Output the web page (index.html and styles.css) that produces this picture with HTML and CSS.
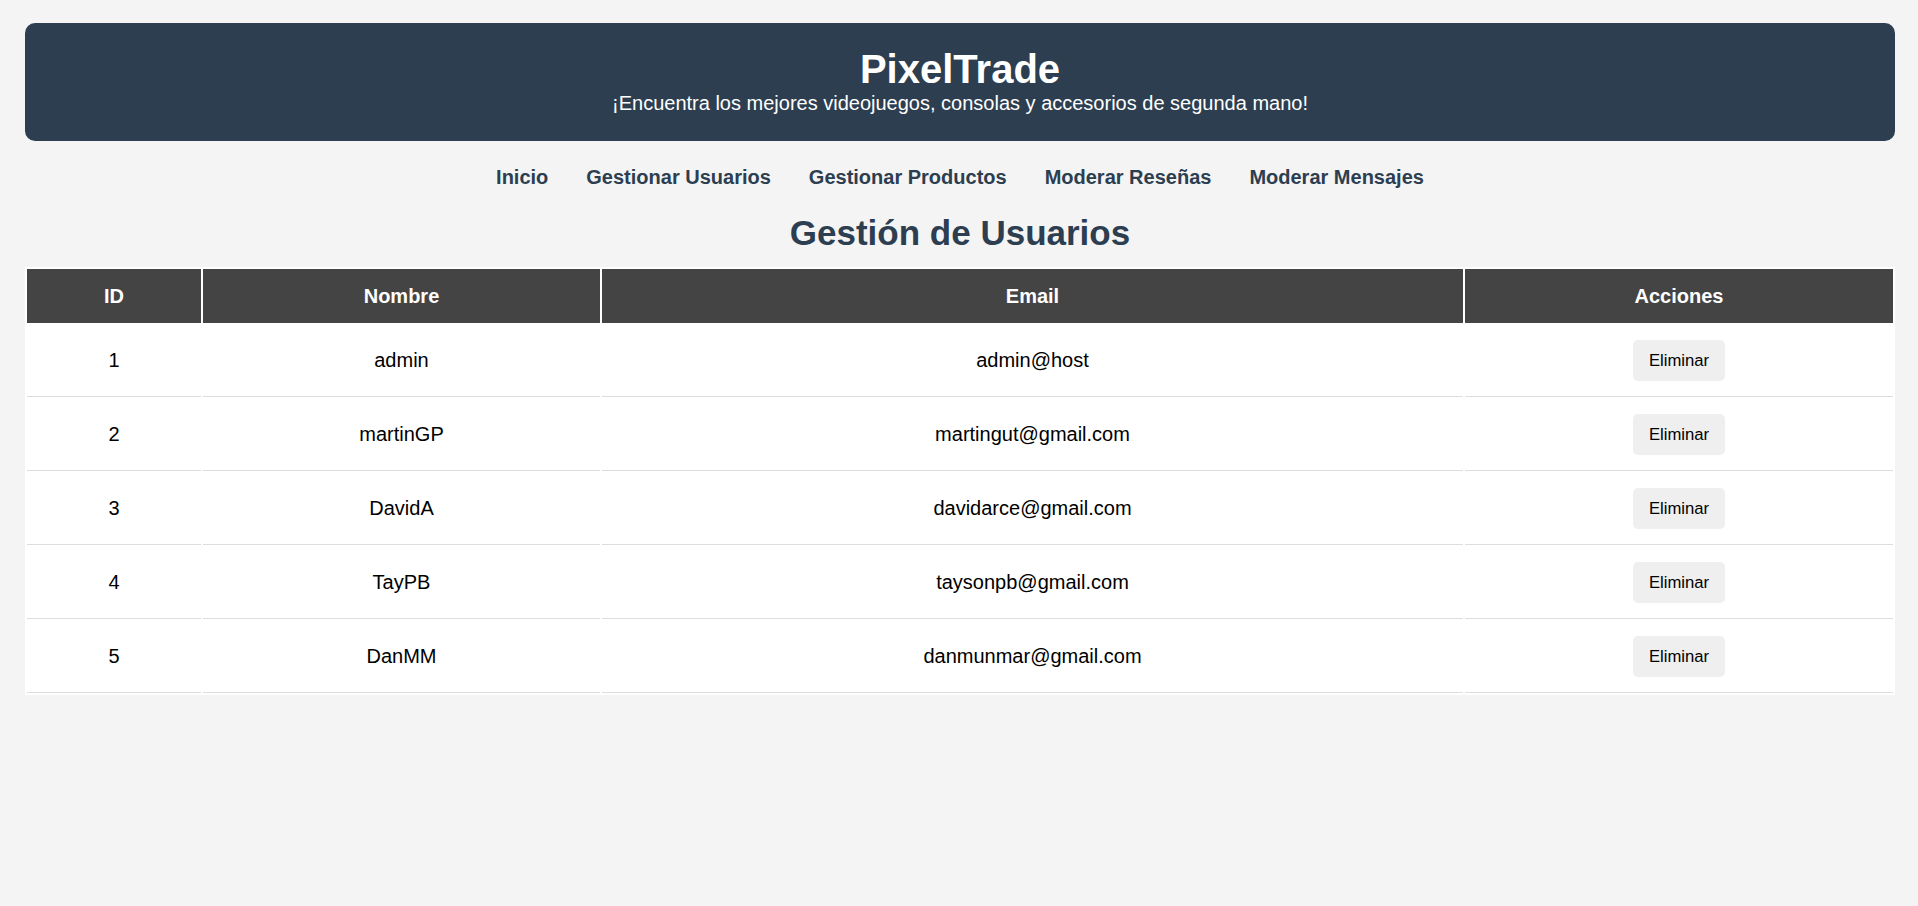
FILE: index.html
```html
<!DOCTYPE html>
<html lang="es">
<head>
<meta charset="utf-8">
<title>PixelTrade - Gestión de Usuarios</title>
<link rel="stylesheet" href="styles.css">
</head>
<body>
<header class="site-header">
  <h1 class="brand">PixelTrade</h1>
  <p class="tagline">¡Encuentra los mejores videojuegos, consolas y accesorios de segunda mano!</p>
</header>
<nav class="main-nav">
  <a href="#">Inicio</a>
  <a href="#">Gestionar Usuarios</a>
  <a href="#">Gestionar Productos</a>
  <a href="#">Moderar Reseñas</a>
  <a href="#">Moderar Mensajes</a>
</nav>
<h2 class="page-title">Gestión de Usuarios</h2>
<table class="users">
  <thead>
    <tr>
      <th class="col-id">ID</th>
      <th class="col-name">Nombre</th>
      <th class="col-email">Email</th>
      <th class="col-actions">Acciones</th>
    </tr>
  </thead>
  <tbody>
    <tr><td>1</td><td>admin</td><td>admin@host</td><td><button class="btn">Eliminar</button></td></tr>
    <tr><td>2</td><td>martinGP</td><td>martingut@gmail.com</td><td><button class="btn">Eliminar</button></td></tr>
    <tr><td>3</td><td>DavidA</td><td>davidarce@gmail.com</td><td><button class="btn">Eliminar</button></td></tr>
    <tr><td>4</td><td>TayPB</td><td>taysonpb@gmail.com</td><td><button class="btn">Eliminar</button></td></tr>
    <tr><td>5</td><td>DanMM</td><td>danmunmar@gmail.com</td><td><button class="btn">Eliminar</button></td></tr>
  </tbody>
</table>
</body>
</html>
```

FILE: styles.css
```css
html, body {
  background: #f4f4f4;
}
body {
  margin: 0;
  padding: 23px 23px 0 25px;
  font-family: "Liberation Sans", Arial, sans-serif;
  color: #000;
}
.site-header {
  background: #2c3e50;
  color: #fff;
  text-align: center;
  padding: 23px 0 26px;
  border-radius: 10px;
}
.brand {
  margin: 0;
  font-size: 40px;
  line-height: 46px;
  font-weight: bold;
}
.tagline {
  margin: 0;
  font-size: 20px;
  line-height: 23px;
}
.main-nav {
  display: flex;
  justify-content: center;
  gap: 38px;
  padding-top: 25px;
}
.main-nav a {
  font-size: 20px;
  line-height: 23px;
  font-weight: bold;
  color: #2c3e50;
  text-decoration: none;
}
.page-title {
  margin: 24px 0 14px;
  font-size: 35px;
  line-height: 40px;
  text-align: center;
  color: #2c3e50;
}
.users {
  width: 100%;
  table-layout: fixed;
  border-spacing: 2px;
  background: #fff;
}
.users th {
  box-sizing: border-box;
  background: #444;
  color: #fff;
  padding: 15px;
  font-size: 20px;
  line-height: 24px;
  font-weight: bold;
  text-align: center;
}
.col-id { width: 174px; }
.col-name { width: 397px; }
.col-email { width: 861px; }
.col-actions { width: 428px; }
.users td {
  padding: 15px;
  border-bottom: 1px solid #ddd;
  font-size: 20px;
  line-height: 23px;
  text-align: center;
  vertical-align: middle;
}
.btn {
  font-family: inherit;
  font-size: 16.67px;
  line-height: 19px;
  padding: 11px 16px;
  border: none;
  border-radius: 5px;
  background: #efefef;
  color: #000;
  cursor: pointer;
}
```
